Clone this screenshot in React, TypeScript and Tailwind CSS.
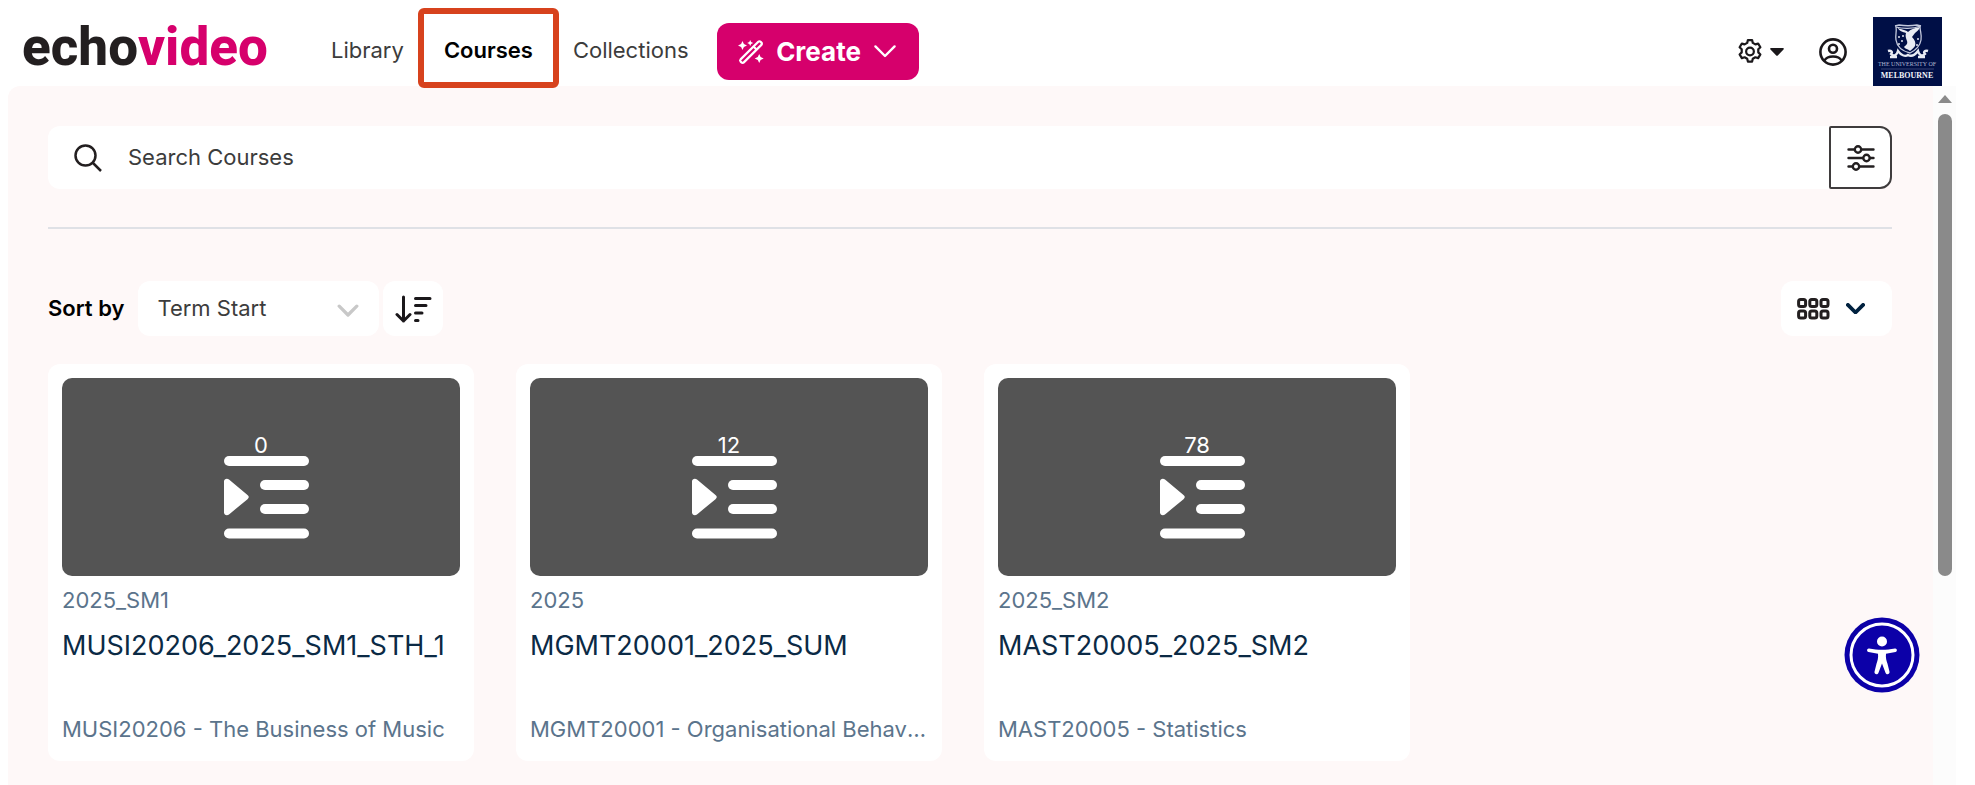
import { useState } from "react";

const courses = [
  { id: 1, count: 0, term: "2025_SM1", title: "MUSI20206_2025_SM1_STH_1", name: "MUSI20206 - The Business of Music" },
  { id: 2, count: 12, term: "2025", title: "MGMT20001_2025_SUM", name: "MGMT20001 - Organisational Behaviour" },
  { id: 3, count: 78, term: "2025_SM2", title: "MAST20005_2025_SM2", name: "MAST20005 - Statistics" },
];

function WandIcon() {
  return (
    <svg width="26" height="24" viewBox="0 0 26 24" fill="none" stroke="currentColor" strokeWidth="2.2" strokeLinejoin="round">
      <path d="M2.6 19.4 20.3 1.8a1.6 1.6 0 0 1 2.3 0l.8.8a1.6 1.6 0 0 1 0 2.3L5.8 22.4a1.6 1.6 0 0 1-2.3 0l-.9-.8a1.6 1.6 0 0 1 0-2.2Z" />
      <path d="m15.5 6.5 3.2 3.2" />
      <path
        fill="currentColor"
        stroke="none"
        d="m4.5 1 1.4 3.1L9 5.5 5.9 6.9 4.5 10 3.1 6.9 0 5.5l3.1-1.4ZM12.2 0l.9 2.100 2.100.9-2.100.9-.9 2.100-.9-2.100L9.200 3l2.100-.9ZM21.200 14l1.400 3.100 3.100 1.400-3.100 1.400-1.400 3.100-1.400-3.100-3.100-1.400 3.100-1.400Z"
      />
    </svg>
  );
}

function GearIcon() {
  return (
    <svg width="28" height="28" viewBox="0 0 24 24" fill="none" stroke="currentColor" strokeWidth="1.9" strokeLinejoin="round">
      <path d="M9.6 4.2 10.2 1.8h3.600l.6 2.400 2.200 1.300 2.400-.7 1.900 3.100-1.800 1.800v2.600l1.800 1.800-1.900 3.100-2.400-.7-2.200 1.300-.6 2.400h-3.600l-.6-2.400-2.200-1.300-2.400.7-1.900-3.100 1.800-1.800V9.700L3.100 7.900 5 4.800l2.400.7Z" />
      <circle cx="12" cy="11.5" r="3.3" />
    </svg>
  );
}

function UserIcon() {
  return (
    <svg width="28" height="28" viewBox="0 0 28 28" fill="none" stroke="currentColor" strokeWidth="2.6">
      <circle cx="14" cy="14" r="12.6" />
      <circle cx="14" cy="10.8" r="4" />
      <path d="M5.5 22.5c1.500-2.800 5-4 8.500-4s7 1.200 8.500 4" />
    </svg>
  );
}

function UniversityLogo() {
  return (
    <svg viewBox="0 0 69 69" className="size-[69px]" role="img" aria-label="The University of Melbourne">
      <rect width="69" height="69" fill="#000f46" />
      <g fill="none" stroke="#c3c9dd" strokeWidth="1.3">
        <path d="M23 10c7 2 17 2 24-1 0 6 2 8 1 14-1 6-5 10-11 13-8-2-13-6-14-13-1-5 1-8 0-13Z" />
        <path d="m22 9 4-1c6 1 12 1 18 0l4 1" />
      </g>
      <path
        fill="#e9ecf4"
        d="M24 10c3 3 8 2 11 5 3-3 7-4 12-5-1 3-3 4-5 6l-3 4c3 3 4 6 3 9-1 2-3 3-5 5-2-2-5-2-6-4 2-2 4-3 3-6-1-3-2-5-1-8-3-1-7-2-9-6Z"
      />
      <g fill="#dfe3ee">
        <circle cx="26" cy="20" r="1" />
        <circle cx="29" cy="24" r="1" />
        <circle cx="26" cy="27" r="1" />
        <circle cx="30" cy="19" r="1" />
        <circle cx="45" cy="22" r="1" />
        <circle cx="44" cy="28" r="1" />
      </g>
      <path
        fill="none"
        stroke="#e9ecf4"
        strokeWidth="2.4"
        d="M15 34c3-1 5 1 3 3 3 3 6 1 7-3 3 4 7 6 10 4 4 2 7 0 10-4 1 4 4 6 7 3-2-2 0-4 3-3M17 40h7m21 0h7"
      />
      <text x="34" y="49" textAnchor="middle" fontSize="6" fill="#aeb6d0" fontFamily="Liberation Serif, serif">
        THE UNIVERSITY OF
      </text>
      <path d="M8 52h53" stroke="#5c6796" strokeWidth=".6" />
      <text x="34" y="61" textAnchor="middle" fontSize="8" fontWeight="700" fill="#f1f3f8" fontFamily="Liberation Serif, serif">
        MELBOURNE
      </text>
    </svg>
  );
}

function SlidersIcon() {
  return (
    <svg width="28" height="26" viewBox="0 0 28 26" fill="white" stroke="#231f20" strokeWidth="2.4" strokeLinecap="round">
      <path d="M1.5 4.5h25M1.5 13h25M1.5 21.5h25" />
      <circle cx="11" cy="4.5" r="3.2" />
      <circle cx="19.5" cy="13" r="3.2" />
      <circle cx="9" cy="21.5" r="3.2" />
    </svg>
  );
}

function SortIcon() {
  return (
    <svg width="38" height="28" viewBox="0 0 38 28" fill="none" stroke="#1b181b" strokeWidth="3" strokeLinecap="round" strokeLinejoin="round">
      <path d="M9.5 2v24M3 19.5l6.5 6.5 6.5-6.5" />
      <path d="M21.5 3.5H36M21.5 10.5H32M21.5 18H28M21.5 25.5H24" />
    </svg>
  );
}

function GridIcon() {
  return (
    <svg width="33" height="22" viewBox="0 0 33 22" fill="none" stroke="#231f20" strokeWidth="3">
      {[1.6, 12.8, 24].map((x) => (
        <g key={x}>
          <rect x={x} y="1.5" width="7" height="7" rx="2" />
          <rect x={x} y="13" width="7" height="7" rx="2" />
        </g>
      ))}
    </svg>
  );
}

function Chevron({ className }: { className: string }) {
  return (
    <svg viewBox="0 0 20 12" fill="none" stroke="currentColor" strokeLinecap="round" strokeLinejoin="round" className={className}>
      <path d="m2 2 8 8 8-8" />
    </svg>
  );
}

function PlaylistIcon() {
  return (
    <svg width="85" height="83" viewBox="0 0 85 83" fill="white" className="ml-[10px]">
      <rect width="85" height="10" rx="5" />
      <rect x="36" y="24" width="49" height="10" rx="5" />
      <rect x="36" y="48" width="49" height="10" rx="5" />
      <rect y="72.5" width="85" height="10" rx="5" />
      <path d="M0 25.5C0 23 3 22 5 23.6L23.5 39c1.700 1.400 1.700 2.800 0 4.200L5 58.400C3 60 0 59 0 56.500Z" />
    </svg>
  );
}

export default function App() {
  const [search, setSearch] = useState("");
  const [sortBy, setSortBy] = useState("Term Start");

  return (
    <div className="h-screen overflow-hidden bg-white pl-2 pr-[19px] flex flex-col font-[Inter,sans-serif] text-[22px] text-[#3c3c3c]">
      {/* Top bar */}
      <header className="flex items-center justify-between pt-[17px] pl-[14px] pr-[14px]">
        <div className="flex items-center">
          <a href="#" className="flex h-[69px] w-[245px] items-center pb-2 text-[53px] leading-none font-extrabold font-[Roboto,sans-serif] text-[#231f20]">
            echo<span className="text-[#d6006c]">video</span>
          </a>
          <nav className="ml-16 flex items-center gap-10 pb-1 leading-8">
            <a href="#">Library</a>
            <a href="#" className="relative font-semibold text-black">
              Courses
              <span className="absolute -inset-x-[26px] -top-[26px] -bottom-[22px] rounded-md border-[6px] border-[#d7421d]" />
            </a>
            <a href="#">Collections</a>
          </nav>
          <button className="ml-7 flex h-[57px] w-[202px] items-center justify-center gap-3 rounded-xl bg-[#d6006c] text-[26px] leading-8 font-bold text-white">
            <WandIcon />
            Create
            <Chevron className="w-6 stroke-2" />
          </button>
        </div>
        <div className="flex items-center text-[#1b181b]">
          <button aria-label="Settings" className="flex items-center gap-[6px]">
            <GearIcon />
            <svg width="14" height="8" viewBox="0 0 14 8" fill="currentColor">
              <path d="M1 0h12c1 0 1 1 .5 1.500L8 7.300c-.6.7-1.400.7-2 0L.5 1.500C0 1 0 0 1 0Z" />
            </svg>
          </button>
          <button aria-label="Account" className="ml-[35px]">
            <UserIcon />
          </button>
          <a href="#" className="ml-[26px]">
            <UniversityLogo />
          </a>
        </div>
      </header>

      <div className="flex min-h-0 flex-1">
        <main className="min-w-0 flex-1 rounded-tl-xl bg-[#fef8f8] pt-10 pl-10 pr-[41px]">
          <div className="flex h-[63px]">
            <label className="flex flex-1 items-center gap-[26px] rounded-l-xl bg-white pl-[26px]">
              <svg width="28" height="28" viewBox="0 0 28 28" fill="none" stroke="#231f20" strokeWidth="2.5">
                <circle cx="11.5" cy="11.5" r="10" />
                <path d="m18.5 18.5 8.5 8.5" />
              </svg>
              <input
                value={search}
                onChange={(e) => setSearch(e.target.value)}
                placeholder="Search Courses"
                aria-label="Search Courses"
                className="flex-1 bg-transparent outline-none placeholder:text-[#3c3c3c]"
              />
            </label>
            <button aria-label="Filters" className="flex w-[63px] items-center justify-center rounded-l-xs rounded-r-xl border-2 border-[#3f3c3d] bg-white">
              <SlidersIcon />
            </button>
          </div>

          <hr className="mt-[38px] border-t-2 border-[#dfe1e6]" />

          {/* Sorting and view options */}
          <div className="mt-[52px] flex h-[55px] items-stretch">
            <label htmlFor="sort" className="flex items-center font-semibold text-black">
              Sort by
            </label>
            <div className="relative ml-[14px] w-[241px]">
              <select
                id="sort"
                value={sortBy}
                onChange={(e) => setSortBy(e.target.value)}
                className="h-full w-full appearance-none rounded-xl bg-white pl-[19px] outline-none"
              >
                <option>Term Start</option>
                <option>Course Name</option>
              </select>
              <Chevron className="pointer-events-none absolute right-5 top-[23px] w-[22px] stroke-3 text-[#c8c8c8]" />
            </div>
            <button aria-label="Sort direction" className="ml-1 flex w-[60px] items-center justify-center rounded-xl bg-white">
              <SortIcon />
            </button>
            <button aria-label="View" className="ml-auto flex w-[111px] items-center rounded-xl bg-white pl-4 text-[#00213f]">
              <GridIcon />
              <Chevron className="ml-4 w-[19px] stroke-4" />
            </button>
          </div>

          <div className="mt-7 grid grid-cols-4 gap-[42px] pr-[14px]">
            {courses.map((course) => (
              <a href="#" key={course.id} className="block rounded-xl bg-white p-[14px] pb-4 text-[#5b748c]">
                <div className="flex h-[198px] flex-col items-center rounded-[10px] bg-[#545454] pt-14 text-white">
                  <span className="leading-[22px]">{course.count}</span>
                  <PlaylistIcon />
                </div>
                <p className="mt-2 leading-8">{course.term}</p>
                <h2 className="mt-3 h-[85px] text-[27px] leading-9 text-[#0b2a45]">{course.title}</h2>
                <p className="truncate leading-8">{course.name}</p>
              </a>
            ))}
          </div>
        </main>

        {/* Scrollbar */}
        <div className="flex w-[23px] flex-col items-center bg-[#fcfcfc] pt-[9px]">
          <svg width="14" height="8" viewBox="0 0 14 8" fill="#8a8a8a">
            <path d="m7 0 7 8H0Z" />
          </svg>
          <div className="mt-[11px] h-[67%] w-[14px] rounded-full bg-[#8a8a8a]" />
        </div>
      </div>

      <button aria-label="Accessibility menu" className="fixed bottom-[92px] right-[55px]">
        <svg width="76" height="76" viewBox="0 0 76 76">
          <circle cx="38" cy="38" r="37.5" fill="#0c00a8" />
          <circle cx="38" cy="38" r="31" fill="none" stroke="white" strokeWidth="3" />
          <g fill="white">
            <circle cx="38" cy="24.5" r="5" />
            <path d="M25 31.500c9 1.800 17 1.800 26 0 2.200-.3 2.600 3 .5 3.500l-9.500 1.700c-.5 4 .5 7 1.500 10l2 8c.5 2.600-3 3.400-3.900 1.200L38 46.500l-3.600 9.400c-.9 2.200-4.400 1.400-3.900-1.200l2-8c1-3 2-6 1.500-10L24.500 35c-2.100-.5-1.700-3.800.5-3.500Z" />
          </g>
        </svg>
      </button>
    </div>
  );
}
